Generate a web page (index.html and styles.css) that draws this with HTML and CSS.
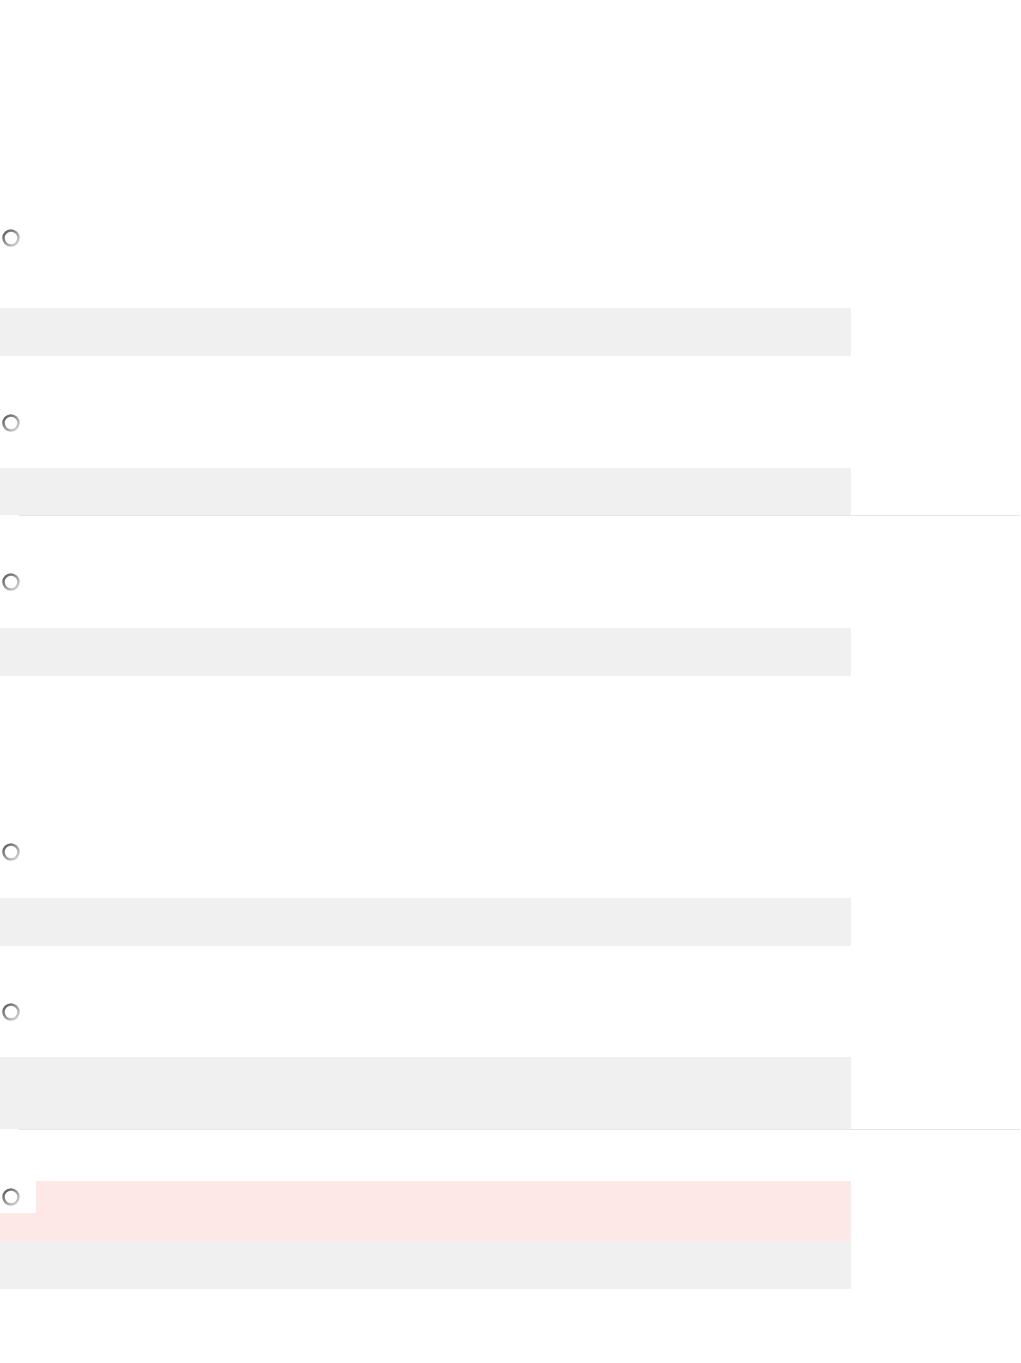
FILE: index.html
```html
<!DOCTYPE html>
<html>
<head>
<meta charset="utf-8">
<link rel="stylesheet" href="styles.css">
</head>
<body>
<svg width="0" height="0" class="defs">
  <defs>
    <linearGradient id="rg" x1="0" y1="0" x2="1" y2="1">
      <stop offset="0" stop-color="#555555"/>
      <stop offset="0.5" stop-color="#9a9a9a"/>
      <stop offset="1" stop-color="#dcdcdc"/>
    </linearGradient>
  </defs>
</svg>
<main class="form">
  <div class="q q-a">
    <div class="opt"><svg class="radio" viewBox="0 0 18 18"><circle cx="9" cy="9" r="7.5" fill="#fff" stroke="url(#rg)" stroke-width="2.5"/></svg></div>
    <div class="field f-a"></div>
  </div>
  <div class="q q-b">
    <div class="opt"><svg class="radio" viewBox="0 0 18 18"><circle cx="9" cy="9" r="7.5" fill="#fff" stroke="url(#rg)" stroke-width="2.5"/></svg></div>
    <div class="field f-b"></div>
  </div>
  <div class="rule"></div>
  <div class="q q-c">
    <div class="opt"><svg class="radio" viewBox="0 0 18 18"><circle cx="9" cy="9" r="7.5" fill="#fff" stroke="url(#rg)" stroke-width="2.5"/></svg></div>
    <div class="field f-c"></div>
  </div>
  <div class="q q-d">
    <div class="opt"><svg class="radio" viewBox="0 0 18 18"><circle cx="9" cy="9" r="7.5" fill="#fff" stroke="url(#rg)" stroke-width="2.5"/></svg></div>
    <div class="field f-d"></div>
  </div>
  <div class="q q-e">
    <div class="opt"><svg class="radio" viewBox="0 0 18 18"><circle cx="9" cy="9" r="7.5" fill="#fff" stroke="url(#rg)" stroke-width="2.5"/></svg></div>
    <div class="field f-e"></div>
  </div>
  <div class="rule"></div>
  <div class="q q-f">
    <div class="error">
      <div class="notch"><svg class="radio" viewBox="0 0 18 18"><circle cx="9" cy="9" r="7.5" fill="#fff" stroke="url(#rg)" stroke-width="2.5"/></svg></div>
    </div>
    <div class="field f-f"></div>
  </div>
</main>
</body>
</html>
```
FILE: styles.css
```css
html, body {
  margin: 0;
  padding: 0;
  background: #ffffff;
  font-family: "Liberation Sans", Arial, sans-serif;
}
.defs {
  position: absolute;
  width: 0;
  height: 0;
}
.form {
  width: 1021px;
  padding-top: 229px;
  display: flex;
  flex-direction: column;
}
.q {
  display: flex;
  flex-direction: column;
}
.opt {
  height: 18px;
  display: flex;
  align-items: center;
  padding-left: 2px;
}
.radio {
  width: 18px;
  height: 18px;
  display: block;
}
.field {
  width: 851px;
  height: 48px;
  background: #f0f0f0;
}
.f-a { margin-top: 61px; }
.q-b { margin-top: 58px; }
.f-b { margin-top: 36px; height: 47px; }
.rule {
  height: 1px;
  margin-left: 18px;
  width: 1002px;
  background: #e6e6e6;
}
.q-c { margin-top: 57px; }
.f-c { margin-top: 37px; }
.q-d { margin-top: 167px; }
.f-d { margin-top: 37px; }
.q-e { margin-top: 57px; }
.f-e { margin-top: 36px; height: 72px; }
.q-f { margin-top: 51px; }
.error {
  width: 851px;
  height: 60px;
  background: #fde7e7;
}
.notch {
  width: 34px;
  height: 32px;
  background: #ffffff;
  padding-left: 2px;
  display: flex;
  align-items: center;
}
```
